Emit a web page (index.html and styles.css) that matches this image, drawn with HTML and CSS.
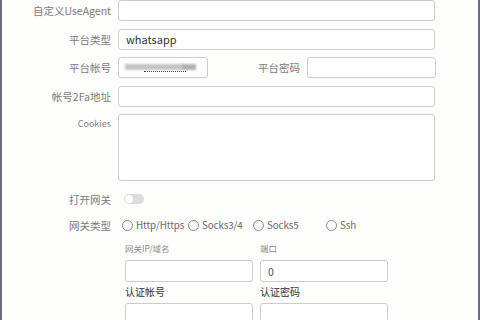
FILE: index.html
```html
<!DOCTYPE html>
<html>
<head>
<meta charset="utf-8">
<link rel="stylesheet" href="styles.css">
</head>
<body>
<div class="frame">
  <div class="form">
    <div class="row">
      <label class="lbl">自定义UseAgent</label>
      <div class="input wide"></div>
    </div>
    <div class="row">
      <label class="lbl">平台类型</label>
      <div class="input wide"><span class="val">whatsapp</span></div>
    </div>
    <div class="row">
      <label class="lbl">平台帐号</label>
      <div class="input short"><span class="blur"></span><span class="blur3"></span><span class="blur2"></span></div>
      <label class="lbl2">平台密码</label>
      <div class="input pwd"></div>
    </div>
    <div class="row">
      <label class="lbl">帐号2Fa地址</label>
      <div class="input wide"></div>
    </div>
    <div class="row top">
      <label class="lbl ck">Cookies</label>
      <div class="input wide area"></div>
    </div>
    <div class="row toggle-row">
      <label class="lbl">打开网关</label>
      <span class="toggle"><span class="knob"></span></span>
    </div>
    <div class="row radio-row">
      <label class="lbl">网关类型</label>
      <div class="radios">
        <span class="radio r1"><span class="circ"></span>Http/Https</span>
        <span class="radio r2"><span class="circ"></span>Socks3/4</span>
        <span class="radio r3"><span class="circ"></span>Socks5</span>
        <span class="radio r4"><span class="circ"></span>Ssh</span>
      </div>
    </div>
    <div class="sub">
      <div class="col">
        <div class="small">网关IP/域名</div>
        <div class="input half"></div>
        <div class="dark">认证帐号</div>
        <div class="input half"></div>
      </div>
      <div class="col">
        <div class="small">端口</div>
        <div class="input half"><span class="val zero">0</span></div>
        <div class="dark">认证密码</div>
        <div class="input half"></div>
      </div>
    </div>
  </div>
</div>
</body>
</html>
```
FILE: styles.css
```css
html, body {
  margin: 0;
  padding: 0;
  background: #fdfdfc;
}
body {
  font-family: "Noto Sans CJK SC", "Noto Sans", sans-serif;
  font-size: 10.5px;
  color: #777;
  width: 480px;
  height: 320px;
  overflow: hidden;
}
.frame {
  box-sizing: border-box;
  width: 480px;
  height: 320px;
  border-left: 2px solid #6e6b82;
  border-right: 2px solid #6e6b82;
  background: #fdfdfc;
}
.form {
  display: flex;
  flex-direction: column;
}
.row {
  display: flex;
  align-items: center;
  margin-bottom: 7.5px;
}
.row.top { align-items: flex-start; }
.lbl {
  width: 109px;
  text-align: right;
  margin-right: 7px;
  line-height: 21px;
  white-space: nowrap;
  color: #7c7c7c;
}
.lbl.ck {
  font-size: 9px;
  line-height: 20px;
}
.input {
  box-sizing: border-box;
  height: 21px;
  border: 1px solid #cbcbcb;
  border-radius: 3px;
  background: #fff;
  display: flex;
  align-items: center;
  position: relative;
  flex-shrink: 0;
}
.wide { width: 317px; }
.short { width: 90px; }
.pwd { width: 129px; }
.lbl2 {
  width: 92px;
  text-align: right;
  margin-right: 7px;
  color: #7c7c7c;
}
.area { height: 67px; }
.val {
  padding-left: 7px;
  color: #333;
  font-size: 11px;
}
.val.zero { color: #555; font-size: 10.5px; }
.blur {
  position: absolute;
  left: 6px;
  top: 6px;
  width: 58px;
  height: 6px;
  background: #c4c4c4;
  filter: blur(1.2px);
}
.blur3 {
  position: absolute;
  left: 63px;
  top: 6px;
  width: 14px;
  height: 6px;
  background: #b0b0b0;
  filter: blur(1.2px);
}
.blur2 {
  position: absolute;
  left: 25px;
  top: 12px;
  width: 42px;
  height: 1px;
  border-bottom: 1px dotted #444;
  filter: blur(0.3px);
}
.toggle-row { margin-bottom: 5px; }
.toggle {
  display: inline-block;
  width: 20px;
  height: 10px;
  border-radius: 5px;
  background: #dcdcdc;
  position: relative;
  margin-left: 6px;
}
.knob {
  position: absolute;
  left: 1px;
  top: 1px;
  width: 8px;
  height: 8px;
  border-radius: 50%;
  background: #fff;
}
.radio-row { margin-bottom: 6.5px; }
.radios {
  display: flex;
  align-items: center;
  color: #6a6a6a;
  font-size: 9.8px;
  letter-spacing: -0.1px;
}
.radio {
  display: inline-flex;
  align-items: center;
  white-space: nowrap;
  flex-shrink: 0;
}
.circ {
  box-sizing: border-box;
  flex-shrink: 0;
  width: 11px;
  height: 11px;
  border: 1px solid #888;
  border-radius: 50%;
  margin-right: 3px;
  background: #fff;
}
.r1 { margin-left: 4px; width: 66px; }
.r2 { width: 65px; }
.r3 { width: 73px; }
.sub {
  display: flex;
  margin-left: 123px;
  gap: 7px;
}
.col {
  display: flex;
  flex-direction: column;
}
.small {
  font-size: 8.5px;
  color: #8a8a8a;
  line-height: 12px;
  margin-bottom: 6px;
}
.half { width: 128px; height: 22px; }
.dark {
  color: #333;
  font-size: 10px;
  line-height: 14px;
  margin: 3px 0 4px;
}
```
